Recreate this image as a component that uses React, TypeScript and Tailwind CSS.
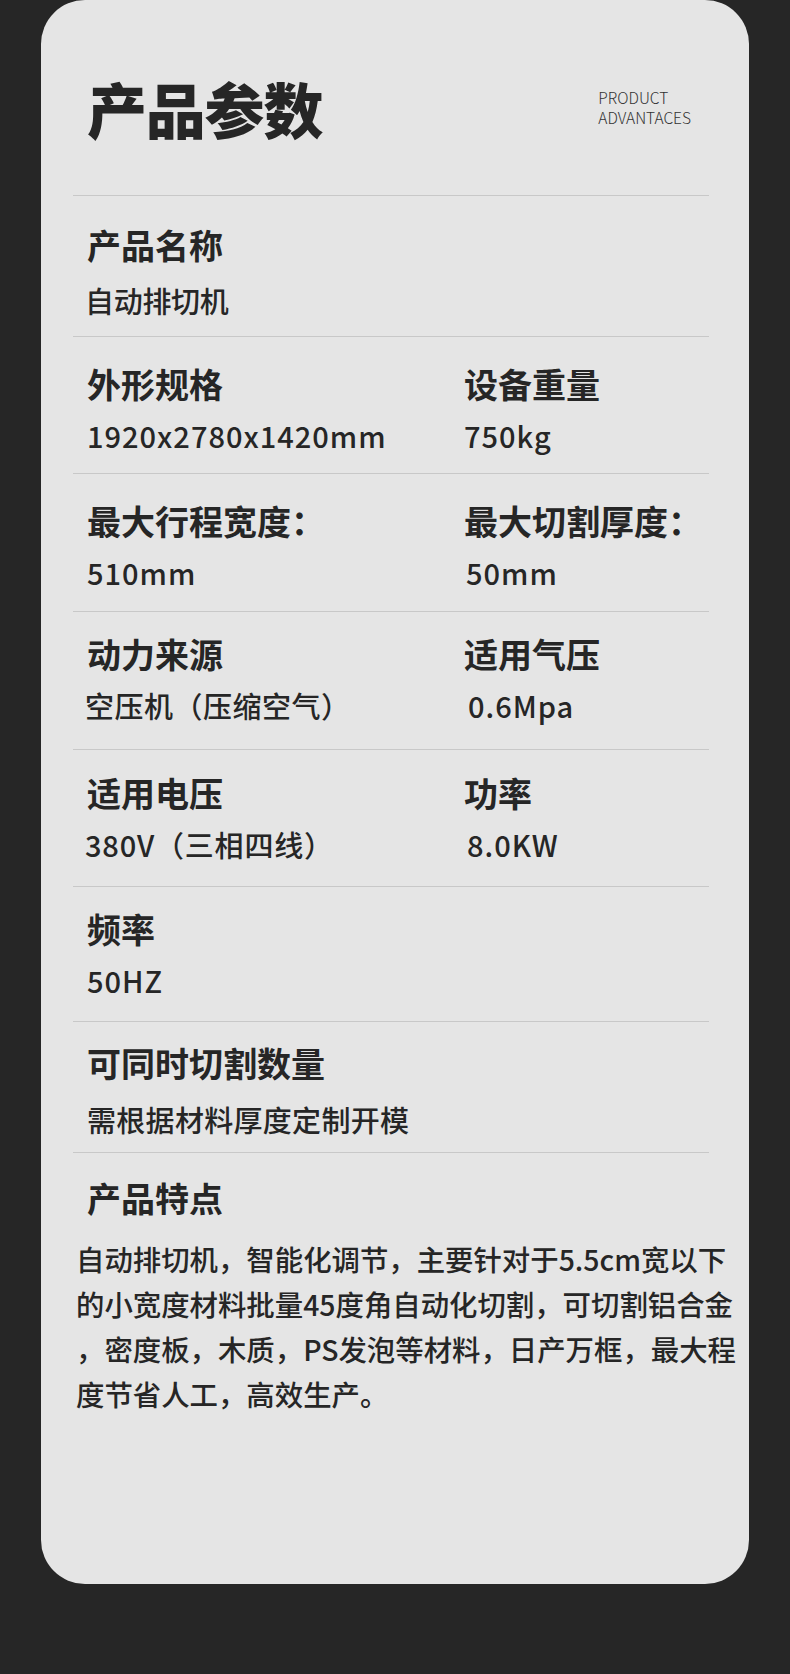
const rows = [
  {
    box: 'h-[141px] pt-[29px]',
    gap: 'mt-[17px]',
    cells: [{ label: '产品名称', value: '自动排切机', fit: '-ml-[2px] tracking-[-0.3px]' }],
  },
  {
    box: 'h-[137px] pt-[27px]',
    gap: 'mt-[13px]',
    cells: [
      { label: '外形规格', value: '1920x2780x1420mm', fit: 'tracking-[1px]' },
      { label: '设备重量', value: '750kg', fit: 'tracking-[1px]' },
    ],
  },
  {
    box: 'h-[138px] pt-[27px]',
    gap: 'mt-[13px]',
    cells: [
      { label: '最大行程宽度：', value: '510mm', fit: 'tracking-[1px]' },
      { label: '最大切割厚度：', value: '50mm', fit: 'ml-[2px] tracking-[1px]' },
    ],
  },
  {
    box: 'h-[138px] pt-[22px]',
    gap: 'mt-[13px]',
    cells: [
      { label: '动力来源', value: '空压机（压缩空气）', fit: '-ml-[2px] tracking-[0.5px]' },
      { label: '适用气压', value: '0.6Mpa', fit: 'ml-[4px] tracking-[1px]' },
    ],
  },
  {
    box: 'h-[137px] pt-[23px]',
    gap: 'mt-[13px]',
    cells: [
      { label: '适用电压', value: '380V（三相四线）', fit: '-ml-[2px] tracking-[0.8px]' },
      { label: '功率', value: '8.0KW', fit: 'ml-[3px] tracking-[1px]' },
    ],
  },
  {
    box: 'h-[135px] pt-[22px]',
    gap: 'mt-[13px]',
    cells: [{ label: '频率', value: '50HZ', fit: 'tracking-[1px]' }],
  },
  {
    box: 'h-[131px] pt-[21px]',
    gap: 'mt-[18px]',
    cells: [{ label: '可同时切割数量', value: '需根据材料厚度定制开模', fit: 'tracking-[0.3px]' }],
  },
];

const featureLines = [
  '自动排切机，智能化调节，主要针对于5.5cm宽以下',
  '的小宽度材料批量45度角自动化切割，可切割铝合金',
  '，密度板，木质，PS发泡等材料，日产万框，最大程',
  '度节省人工，高效生产。',
];

export default function App() {
  return (
    <div className="min-h-[1674px] bg-[#262626] px-[41px] pb-[90px] font-['Noto_Sans_CJK_SC',sans-serif] text-[#262626]">
      <div className="h-[1584px] overflow-hidden rounded-[44px] bg-[#e5e5e5]">
        <header className="flex h-[195px] items-start justify-between pl-[46px] pr-[58px] pt-[78px]">
          <h1 className="text-[60px] font-black leading-[60px] tracking-[-1.2px]">产品参数</h1>
          <p className="mt-[9px] text-[15.5px] font-light leading-[20px] text-[#333]">
            PRODUCT
            <br />
            ADVANTACES
          </p>
        </header>

        <div className="ml-[32px] mr-[40px]">
          {rows.map((row, i) => (
            <div key={i} className={`grid grid-cols-[377px_1fr] border-t border-[#c8c8c8] pl-[14px] ${row.box}`}>
              {row.cells.map((cell) => (
                <div key={cell.label} className="flex flex-col">
                  <span className="text-[34px] font-bold leading-[40px]">{cell.label}</span>
                  <span className={`whitespace-nowrap text-[29px] font-medium leading-[36px] ${row.gap} ${cell.fit}`}>
                    {cell.value}
                  </span>
                </div>
              ))}
            </div>
          ))}

          <div className="border-t border-[#c8c8c8] pt-[25px]">
            <span className="block pl-[14px] text-[34px] font-bold leading-[40px]">产品特点</span>
            <div className="mt-[18px] pl-[3px] text-[28.4px] font-medium leading-[45px]">
              {featureLines.map((line) => (
                <div key={line} className="whitespace-nowrap">
                  {line}
                </div>
              ))}
            </div>
          </div>
        </div>
      </div>
    </div>
  );
}
